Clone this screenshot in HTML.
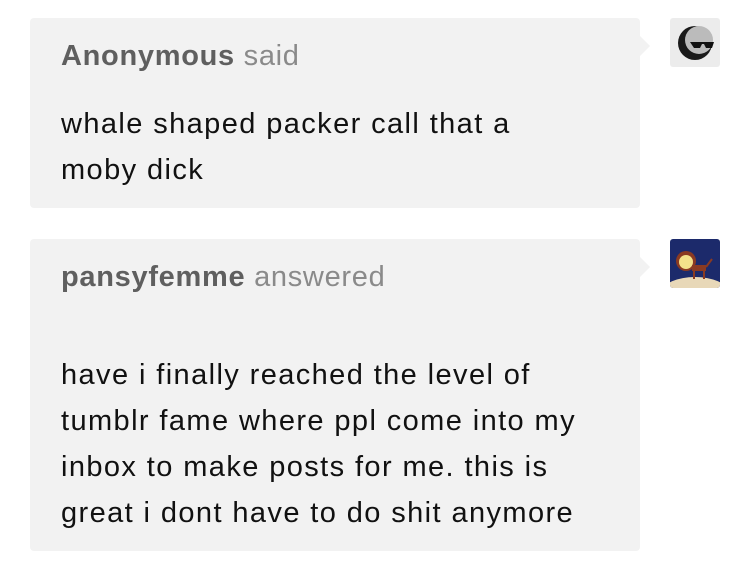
<!DOCTYPE html>
<html><head><meta charset="utf-8"><style>
body{margin:0;width:750px;height:584px;background:#fff;font-family:"Liberation Sans",sans-serif;position:relative;overflow:hidden}
.b{position:absolute;left:30px;width:610px;background:#f2f2f2;border-radius:4px}
.b:after{content:"";position:absolute;right:-10px;top:18px;border-left:10px solid #f2f2f2;border-top:10px solid transparent;border-bottom:10px solid transparent}
.h{position:absolute;left:31px;font-size:29px;letter-spacing:0.7px;color:#8a8a8a;white-space:nowrap}
.h b{color:#5f5f5f}
.t{position:absolute;left:31px;font-size:29px;letter-spacing:1.4px;color:#111;line-height:46px;white-space:nowrap}
.av{position:absolute;left:670px;width:50px;height:49px;border-radius:3px;overflow:hidden}
</style></head><body>
<div class="b" style="top:18px;height:190px">
<div class="h" style="top:22px"><b>Anonymous</b> said</div>
<div class="t" style="top:83px">whale shaped packer call that a<br>moby dick</div>
</div>
<div class="av" style="top:18px;background:#ececec">
<svg width="50" height="49" viewBox="0 0 50 49"><circle cx="25" cy="25" r="17" fill="#1a1a1a"/><circle cx="29" cy="22" r="14" fill="#bbb"/><path d="M20 24h24l-2 6h-6l-2-4h-2l-2 4h-6z" fill="#111"/></svg>
</div>
<div class="b" style="top:239px;height:312px">
<div class="h" style="top:22px"><b>pansyfemme</b> answered</div>
<div class="t" style="top:113px">have i finally reached the level of<br>tumblr fame where ppl come into my<br>inbox to make posts for me. this is<br>great i dont have to do shit anymore</div>
</div>
<div class="av" style="top:239px;background:#1c2a6b">
<svg width="50" height="49" viewBox="0 0 50 49"><ellipse cx="25" cy="52" rx="32" ry="14" fill="#e8d8b8"/><circle cx="16" cy="22" r="10" fill="#8a3a22"/><circle cx="16" cy="23" r="7" fill="#f3e18a"/><rect x="22" y="26" width="14" height="6" fill="#8a3a22"/><path d="M24 32v8M34 32v8M36 28l6-8" stroke="#8a3a22" stroke-width="2"/></svg>
</div>
</body></html>
